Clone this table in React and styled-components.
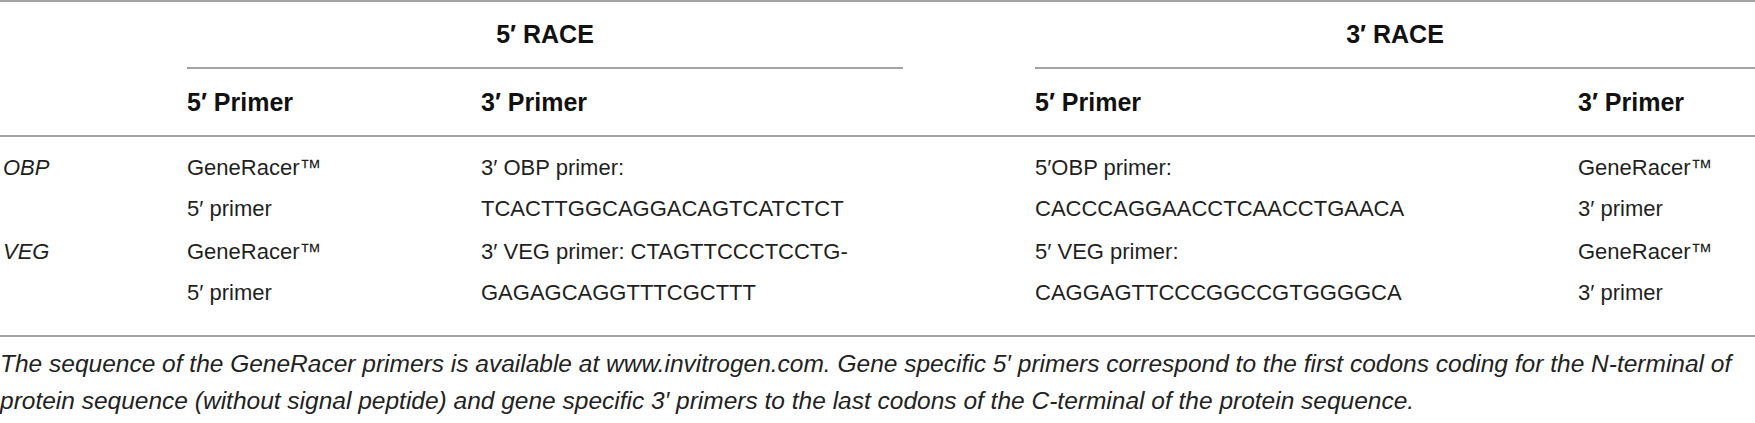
import React from "react";
import styled, { createGlobalStyle } from "styled-components";

const GlobalStyle = createGlobalStyle`
  html, body { margin: 0; padding: 0; background: #ffffff; }
  body { font-family: "Liberation Sans", Arial, sans-serif; color: #1a1a1a; }
`;

const COLS = "187px 294px 554px 543px 177px";
const RULE = "2px solid #a3a3a3";

const Table = styled.div`
  width: 1755px;
  border-top: ${RULE};
`;

const Row = styled.div`
  display: grid;
  grid-template-columns: ${COLS};
  align-items: ${(p) => (p.$head ? "center" : "start")};
  height: ${(p) => p.$h || "auto"};
`;

const HeadGroup = styled.div`
  border-bottom: ${(p) => (p.$rule ? RULE : "none")};
`;

const SpanHead = styled.div`
  grid-column: ${(p) => p.$cols};
  margin-right: ${(p) => p.$gap || "0px"};
  height: 100%;
  display: flex;
  align-items: center;
  justify-content: center;
  border-bottom: ${RULE};
  box-sizing: border-box;
  font-weight: 700;
  font-size: 25px;
  color: #111;
`;

const HeadCell = styled.div`
  font-weight: 700;
  font-size: 25px;
  color: #111;
`;

const Body = styled.div`
  padding: 10px 0 22px;
  border-bottom: ${RULE};
  display: flex;
  flex-direction: column;
  gap: 2px;
`;

const Cell = styled.div`
  font-size: 22px;
  line-height: 41px;
  font-style: ${(p) => (p.$italic ? "italic" : "normal")};
  padding-left: ${(p) => (p.$italic ? "3px" : "0")};
  color: #1f1f1f;
`;

const Note = styled.p`
  margin: 0;
  padding-top: 8px;
  font-family: "Liberation Sans", Arial, sans-serif;
  font-style: italic;
  font-size: 24.5px;
  line-height: 37px;
  color: #222;
  white-space: nowrap;
`;

const rows = [
  {
    gene: "OBP",
    c1: ["GeneRacer™", "5′ primer"],
    c2: ["3′ OBP primer:", "TCACTTGGCAGGACAGTCATCTCT"],
    c3: ["5′OBP primer:", "CACCCAGGAACCTCAACCTGAACA"],
    c4: ["GeneRacer™", "3′ primer"],
  },
  {
    gene: "VEG",
    c1: ["GeneRacer™", "5′ primer"],
    c2: ["3′ VEG primer: CTAGTTCCCTCCTG-", "GAGAGCAGGTTTCGCTTT"],
    c3: ["5′ VEG primer:", "CAGGAGTTCCCGGCCGTGGGGCA"],
    c4: ["GeneRacer™", "3′ primer"],
  },
];

const Lines = ({ lines }) => (
  <>
    {lines[0]}
    <br />
    {lines[1]}
  </>
);

export default function App() {
  return (
    <>
      <GlobalStyle />
      <Table>
        <Row $head $h="67px">
          <div />
          <SpanHead $cols="2 / 4" $gap="132px">5′ RACE</SpanHead>
          <SpanHead $cols="4 / 6">3′ RACE</SpanHead>
        </Row>
        <HeadGroup $rule>
          <Row $head $h="66px">
            <div />
            <HeadCell>5′ Primer</HeadCell>
            <HeadCell>3′ Primer</HeadCell>
            <HeadCell>5′ Primer</HeadCell>
            <HeadCell>3′ Primer</HeadCell>
          </Row>
        </HeadGroup>
        <Body>
          {rows.map((r) => (
            <Row key={r.gene}>
              <Cell $italic>{r.gene}</Cell>
              <Cell><Lines lines={r.c1} /></Cell>
              <Cell><Lines lines={r.c2} /></Cell>
              <Cell><Lines lines={r.c3} /></Cell>
              <Cell><Lines lines={r.c4} /></Cell>
            </Row>
          ))}
        </Body>
        <Note>
          The sequence of the GeneRacer primers is available at www.invitrogen.com. Gene specific 5′ primers correspond to the first codons coding for the N-terminal of
          <br />
          protein sequence (without signal peptide) and gene specific 3′ primers to the last codons of the C-terminal of the protein sequence.
        </Note>
      </Table>
    </>
  );
}
